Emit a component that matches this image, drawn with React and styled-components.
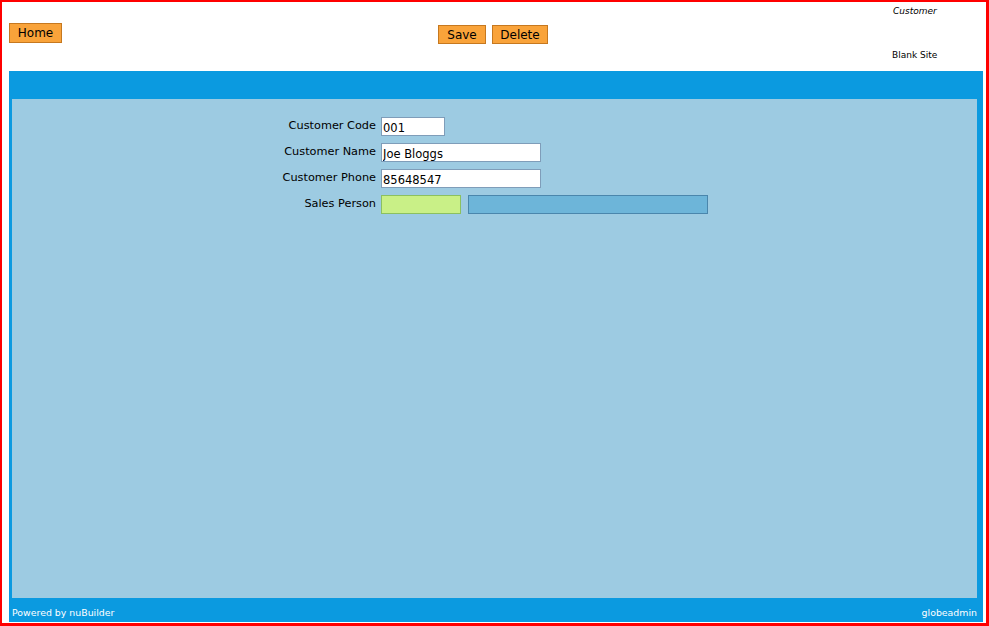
import React from 'react'
import styled, { createGlobalStyle } from 'styled-components'

const Global = createGlobalStyle`
    html, body {
        margin: 0;
        padding: 0;
        background: #fff;
    }
    body {
        font-family: 'DejaVu Sans', Verdana, sans-serif;
    }
`

const Frame = styled.div`
    width: 989px;
    height: 626px;
    box-sizing: border-box;
    border-style: solid;
    border-color: #ff0000;
    border-width: 2px 3px 3px 2px;
    display: flex;
    flex-direction: column;
    background: #fff;
`

const TopBar = styled.div`
    height: 69px;
    display: grid;
    grid-template-columns: 429px 1fr 94px;
`

const LeftTools = styled.div`
    padding: 20px 0 0 7px;
`

const CenterTools = styled.div`
    padding: 23px 0 0 7px;
    display: flex;
    gap: 6px;
    align-items: flex-start;
`

const Button = styled.button`
    font-family: 'DejaVu Sans', Verdana, sans-serif;
    font-size: 12px;
    color: #000;
    background: #f9a33a;
    border: 1px solid #c6781f;
    height: ${(p) => p.h || 19}px;
    width: ${(p) => p.w}px;
    padding: 0;
    margin: 0;
    line-height: 1;
    cursor: pointer;
`

const SiteInfo = styled.div`
    display: flex;
    flex-direction: column;
    padding: 4px 0 0 0;
    font-size: 9px;
    font-family: 'DejaVu Sans', Verdana, sans-serif;
`

const FormTitle = styled.div`
    font-style: italic;
    padding-left: 1px;
`

const SiteName = styled.div`
    margin-top: 34px;
`

const Panel = styled.div`
    margin: 0 3px 1px 7px;
    flex: 1;
    background: #0b9ae0;
    display: flex;
    flex-direction: column;
    padding: 0 6px 0 3px;
`

const PanelHeader = styled.div`
    height: 28px;
`

const Body = styled.div`
    flex: 1;
    background: #9dcbe2;
    padding-top: 18px;
`

const Row = styled.div`
    display: flex;
    align-items: center;
    height: 19px;
    margin-bottom: 7px;
`

const Label = styled.label`
    width: 369px;
    box-sizing: border-box;
    text-align: right;
    padding-right: 5px;
    font-size: 11.3px;
    color: #000;
    margin-top: -3px;
`

const Input = styled.input`
    box-sizing: border-box;
    width: ${(p) => p.w}px;
    height: 19px;
    border: 1px solid #7f9db9;
    background: #fff;
    font-family: 'DejaVu Sans', Verdana, sans-serif;
    font-size: 11.5px;
    padding: 2px 0 0 1px;
    margin: 0;
    color: #000;
    outline: none;
`

const LookupCode = styled(Input)`
    background: #c9f087;
    border-color: #8cc060;
`

const LookupDesc = styled(Input)`
    background: #6db5d9;
    border-color: #4a86ac;
    margin-left: 7px;
`

const Footer = styled.div`
    height: 24px;
    display: flex;
    justify-content: space-between;
    align-items: center;
    padding: 4px 0 0 0;
    box-sizing: border-box;
    color: #fff;
    font-size: 9.4px;
`

export default function App() {
    return (
        <>
            <Global />
            <Frame>
                <TopBar>
                    <LeftTools>
                        <Button w={53} h={20}>Home</Button>
                    </LeftTools>
                    <CenterTools>
                        <Button w={48}>Save</Button>
                        <Button w={56}>Delete</Button>
                    </CenterTools>
                    <SiteInfo>
                        <FormTitle>Customer</FormTitle>
                        <SiteName>Blank Site</SiteName>
                    </SiteInfo>
                </TopBar>
                <Panel>
                    <PanelHeader />
                    <Body>
                        <Row>
                            <Label>Customer Code</Label>
                            <Input w={64} defaultValue="001" />
                        </Row>
                        <Row>
                            <Label>Customer Name</Label>
                            <Input w={160} defaultValue="Joe Bloggs" />
                        </Row>
                        <Row>
                            <Label>Customer Phone</Label>
                            <Input w={160} defaultValue="85648547" />
                        </Row>
                        <Row>
                            <Label>Sales Person</Label>
                            <LookupCode w={80} defaultValue="" />
                            <LookupDesc w={240} defaultValue="" readOnly />
                        </Row>
                    </Body>
                    <Footer>
                        <span>Powered by nuBuilder</span>
                        <span>globeadmin</span>
                    </Footer>
                </Panel>
            </Frame>
        </>
    )
}
